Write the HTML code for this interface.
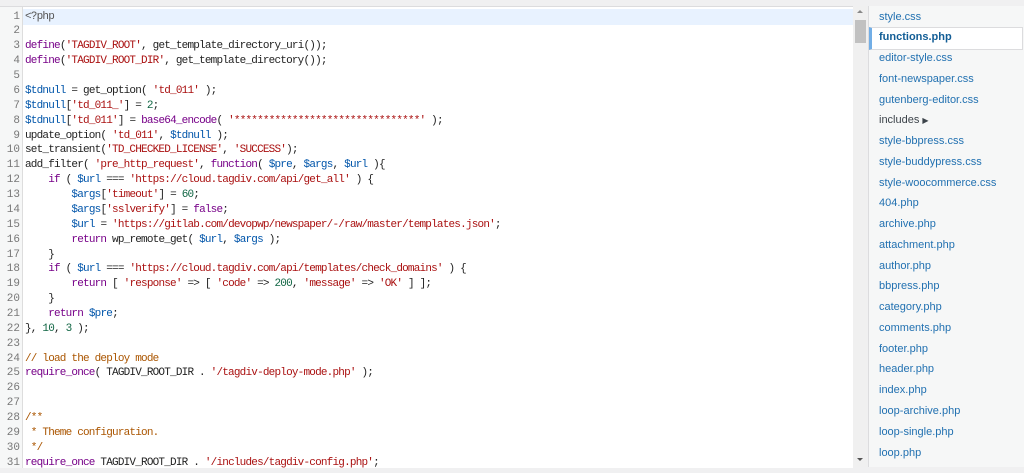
<!DOCTYPE html>
<html><head><meta charset="utf-8"><style>
body{margin:0;width:1024px;height:473px;background:#f0f0f1;position:relative;overflow:hidden;font-family:"Liberation Sans",sans-serif}
#ed{position:absolute;left:0;top:6px;width:853px;height:461px;background:#fff;border-top:1px solid #dcdcde;overflow:hidden}
#gut{position:absolute;left:0;top:0;width:22px;height:100%;background:#f6f7f7;border-right:1px solid #ddd}
#hl{position:absolute;left:23px;top:2px;width:830px;height:16px;background:#e8f2ff}
.l{position:absolute;left:0;height:15px;line-height:15px;font-family:"Liberation Mono",monospace;font-size:11px;letter-spacing:-0.8px;white-space:pre;color:#222}
.n{position:absolute;left:0;width:20px;text-align:right;color:#777;letter-spacing:0}
.c{position:absolute;left:25px}
.k{color:#708}.s{color:#a11}.v{color:#05a}.d{color:#164}.m{color:#a50}.p{color:#555}
#sb{position:absolute;left:853px;top:6px;width:14px;height:461px;background:#f0f0f0}
#side{position:absolute;left:868px;top:6px;width:156px;height:461px;background:#f6f7f7;border-left:1px solid #dcdcde}
.f{position:absolute;left:10px;font-size:11px;color:#2271b1;white-space:nowrap}
#act{position:absolute;left:0;top:21px;width:154px;height:23px;background:#fff;border:1px solid #dcdcde;border-left:3px solid #72aee6;box-sizing:border-box}
</style></head><body>
<div id="ed"><div id="gut"></div><div id="hl"></div>
<div id="lines"></div></div>
<div id="sb"><div style="position:absolute;left:4px;top:4px;border:3px solid transparent;border-bottom:3px solid #888;border-top:0"></div><div style="position:absolute;left:2px;top:14px;width:11px;height:23px;background:#c1c1c1"></div><div style="position:absolute;left:4px;top:452px;border:3px solid transparent;border-top:3px solid #555;border-bottom:0"></div></div>
<div id="side"><div id="act"></div></div>
<script>
var L=[
'<span class="p">&lt;?php</span>','',
'<span class="k">define</span>(<span class="s">\'TAGDIV_ROOT\'</span>, get_template_directory_uri());',
'<span class="k">define</span>(<span class="s">\'TAGDIV_ROOT_DIR\'</span>, get_template_directory());','',
'<span class="v">$tdnull</span> = get_option( <span class="s">\'td_011\'</span> );',
'<span class="v">$tdnull</span>[<span class="s">\'td_011_\'</span>] = <span class="d">2</span>;',
'<span class="v">$tdnull</span>[<span class="s">\'td_011\'</span>] = <span class="k">base64_encode</span>( <span class="s">\'********************************\'</span> );',
'update_option( <span class="s">\'td_011\'</span>, <span class="v">$tdnull</span> );',
'set_transient(<span class="s">\'TD_CHECKED_LICENSE\'</span>, <span class="s">\'SUCCESS\'</span>);',
'add_filter( <span class="s">\'pre_http_request\'</span>, <span class="k">function</span>( <span class="v">$pre</span>, <span class="v">$args</span>, <span class="v">$url</span> ){',
'    <span class="k">if</span> ( <span class="v">$url</span> === <span class="s">\'https://cloud.tagdiv.com/api/get_all\'</span> ) {',
'        <span class="v">$args</span>[<span class="s">\'timeout\'</span>] = <span class="d">60</span>;',
'        <span class="v">$args</span>[<span class="s">\'sslverify\'</span>] = <span class="k">false</span>;',
'        <span class="v">$url</span> = <span class="s">\'https://gitlab.com/devopwp/newspaper/-/raw/master/templates.json\'</span>;',
'        <span class="k">return</span> wp_remote_get( <span class="v">$url</span>, <span class="v">$args</span> );',
'    }',
'    <span class="k">if</span> ( <span class="v">$url</span> === <span class="s">\'https://cloud.tagdiv.com/api/templates/check_domains\'</span> ) {',
'        <span class="k">return</span> [ <span class="s">\'response\'</span> =&gt; [ <span class="s">\'code\'</span> =&gt; <span class="d">200</span>, <span class="s">\'message\'</span> =&gt; <span class="s">\'OK\'</span> ] ];',
'    }',
'    <span class="k">return</span> <span class="v">$pre</span>;',
'}, <span class="d">10</span>, <span class="d">3</span> );','',
'<span class="m">// load the deploy mode</span>',
'<span class="k">require_once</span>( TAGDIV_ROOT_DIR . <span class="s">\'/tagdiv-deploy-mode.php\'</span> );','','',
'<span class="m">/**</span>','<span class="m"> * Theme configuration.</span>','<span class="m"> */</span>',
'<span class="k">require_once</span> TAGDIV_ROOT_DIR . <span class="s">\'/includes/tagdiv-config.php\'</span>;'];
var h='';for(var i=0;i<L.length;i++){h+='<div class="l" style="top:'+(2.6+i*14.87).toFixed(2)+'px;width:853px"><span class="n">'+(i+1)+'</span><span class="c">'+L[i]+'</span></div>';}
document.getElementById('lines').innerHTML=h;
var F=['style.css','functions.php','editor-style.css','font-newspaper.css','gutenberg-editor.css','includes','style-bbpress.css','style-buddypress.css','style-woocommerce.css','404.php','archive.php','attachment.php','author.php','bbpress.php','category.php','comments.php','footer.php','header.php','index.php','loop-archive.php','loop-single.php','loop.php'];
var s='';for(var j=0;j<F.length;j++){var y=4.5+j*20.76;var st='top:'+y.toFixed(1)+'px;';if(j==1)st+='font-weight:bold;color:#135e96;';if(j==5)st+='color:#3c434a;';s+='<div class="f" style="'+st+'">'+F[j]+(j==5?' <span style="font-size:8px">&#9654;</span>':'')+'</div>';}
document.getElementById('side').innerHTML+=s;
</script>
</body></html>
